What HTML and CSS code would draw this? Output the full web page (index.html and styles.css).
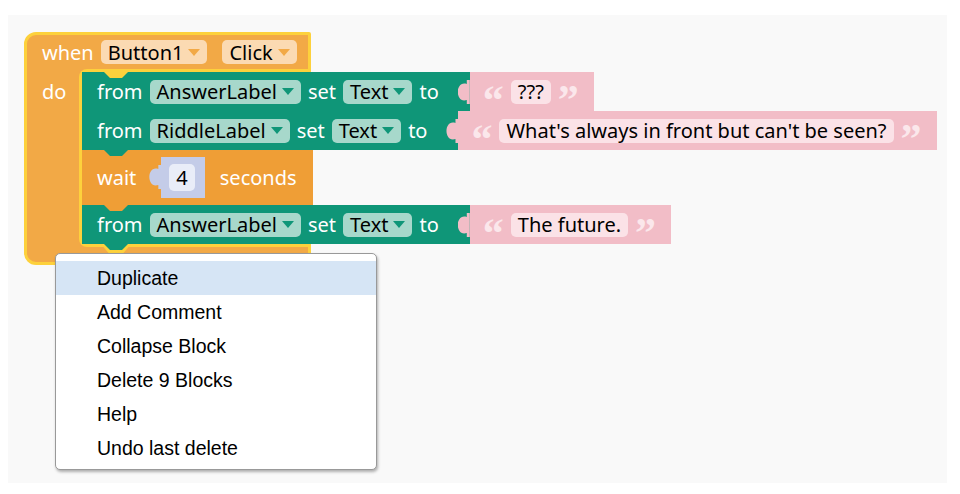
FILE: index.html
```html
<!DOCTYPE html>
<html>
	<head>
		<meta charset="UTF-8">
		<title>Blocks</title>
		<link rel="stylesheet" href="styles.css">
	</head>
	<body>
		<div class="workspace">
			<div class="event">
				<div class="head">
					<span class="lbl">when</span>
					<span class="dd dd-o">Button1<i class="arrow"></i></span>
					<span class="dd dd-o click">Click<i class="arrow"></i></span>
				</div>
				<div class="body">
					<div class="do"><span class="lbl">do</span></div>
					<div class="mouth">
						<div class="stmt set">
							<span class="lbl">from</span>
							<span class="dd dd-g">AnswerLabel<i class="arrow"></i></span>
							<span class="lbl">set</span>
							<span class="dd dd-g">Text<i class="arrow"></i></span>
							<span class="lbl">to</span>
							<div class="str">
								<span class="q">“</span><span class="field">???</span><span class="q">”</span>
							</div>
						</div>
						<div class="stmt set">
							<span class="lbl">from</span>
							<span class="dd dd-g">RiddleLabel<i class="arrow"></i></span>
							<span class="lbl">set</span>
							<span class="dd dd-g">Text<i class="arrow"></i></span>
							<span class="lbl">to</span>
							<div class="str">
								<span class="q">“</span><span class="field">What's always in front but can't be seen?</span><span class="q">”</span>
							</div>
						</div>
						<div class="stmt wait">
							<span class="lbl">wait</span>
							<div class="num"><span class="field">4</span></div>
							<span class="lbl">seconds</span>
						</div>
						<div class="stmt set">
							<span class="lbl">from</span>
							<span class="dd dd-g">AnswerLabel<i class="arrow"></i></span>
							<span class="lbl">set</span>
							<span class="dd dd-g">Text<i class="arrow"></i></span>
							<span class="lbl">to</span>
							<div class="str">
								<span class="q">“</span><span class="field">The future.</span><span class="q">”</span>
							</div>
						</div>
					</div>
				</div>
				<div class="foot"></div>
			</div>
			<ul class="menu">
				<li class="hover">Duplicate</li>
				<li>Add Comment</li>
				<li>Collapse Block</li>
				<li>Delete 9 Blocks</li>
				<li>Help</li>
				<li>Undo last delete</li>
			</ul>
		</div>
	</body>
</html>
```
FILE: styles.css
```css
* {
	margin: 0;
	padding: 0;
	box-sizing: border-box;
}
body {
	background: #fff;
	font-family: "Noto Sans", "Open Sans", sans-serif;
	font-size: 20px;
	white-space: nowrap;
}
.workspace {
	position: relative;
	width: 939px;
	height: 468px;
	margin: 15px 0 0 8px;
	padding: 17px 0 0 16px;
	background: #f9f9f9;
}
/* event block (when ... do) */
.event {
	width: 287px;
	border: 3px solid #fdd13c;
	border-radius: 12px 2px 2px 12px;
	background: #f2a946;
}
.head {
	display: flex;
	align-items: center;
	gap: 7px;
	height: 34px;
	padding-left: 15px;
}
.head .click {
	margin-left: 8px;
}
.body {
	display: flex;
}
.do {
	flex: none;
	width: 52px;
	padding: 3px 0 0 15px;
	line-height: 40px;
}
.mouth {
	position: relative;
	flex: 1;
	min-width: 0;
	display: flex;
	flex-direction: column;
	align-items: flex-start;
	border: 3px solid #fdd13c;
	border-right: none;
	border-radius: 8px 0 0 8px;
}
.mouth::before,
.mouth::after,
.stmt::after {
	content: '';
	position: absolute;
	clip-path: polygon(0 0, 100% 0, 75% 100%, 25% 100%);
}
.mouth::before {
	left: 22px;
	top: 0;
	width: 24px;
	height: 6px;
	background: #fdd13c;
	z-index: 1;
}
.mouth::after {
	left: 19px;
	top: 100%;
	width: 30px;
	height: 9px;
	background: #fdd13c;
	z-index: 1;
}
.foot {
	height: 15px;
}
.lbl {
	color: #fff;
}
/* statements */
.stmt {
	position: relative;
	display: flex;
	align-items: center;
	gap: 7px;
	width: max-content;
	padding-left: 15px;
}
.stmt::after {
	left: 22px;
	top: 100%;
	width: 24px;
	height: 6px;
	background: inherit;
	z-index: 2;
}
.set {
	height: 39px;
	background: #0f9678;
}
.wait {
	height: 55px;
	padding-right: 16px;
	background: #ef9e36;
}
.wait .num {
	margin: 0 8px 0 18px;
}
/* dropdown fields */
.dd {
	display: flex;
	align-items: center;
	height: 24px;
	padding: 0 7px;
	border-radius: 5px;
	color: #000;
}
.arrow {
	display: inline-block;
	width: 0;
	height: 0;
	margin-left: 5px;
	border-left: 6.5px solid transparent;
	border-right: 6.5px solid transparent;
	border-top: 7px solid;
}
.dd-o {
	background: #fbdab2;
}
.dd-o .arrow {
	border-top-color: #f2a946;
}
.dd-g {
	background: #a7d8cb;
}
.dd-g .arrow {
	border-top-color: #0f9678;
}
/* text value blocks */
.str {
	position: relative;
	display: flex;
	align-items: center;
	gap: 7px;
	align-self: stretch;
	margin-left: 24px;
	padding: 0 15px 0 13px;
	background: #f2bdc7;
}
.str::before,
.num::before {
	content: '';
	position: absolute;
	left: -12px;
	top: 8px;
	width: 12px;
	height: 24px;
	background: inherit;
	clip-path: path('M12,0 V24 H9 V20 C3,22 0,17 0,12 C0,7 3,2 9,4 V0 Z');
}
.q {
	color: #fbe7eb;
	font-family: "Liberation Serif", serif;
	font-weight: bold;
	font-size: 42px;
	line-height: 20px;
	transform: translateY(8px);
}
.field {
	height: 24px;
	line-height: 24px;
	padding: 0 7px;
	border-radius: 5px;
	background: #fbe2e7;
	color: #000;
}
.num {
	position: relative;
	display: flex;
	align-items: center;
	height: 41px;
	padding: 0 10px 0 8px;
	background: #c4cce8;
}
.num .field {
	height: 27px;
	line-height: 27px;
	background: #e9edf8;
}
/* context menu */
.menu {
	position: absolute;
	left: 47px;
	top: 238px;
	z-index: 5;
	width: 322px;
	padding: 7px 0 4px;
	list-style: none;
	background: #fff;
	border: 1px solid #999;
	border-radius: 5px;
	box-shadow: 1px 2px 3px rgba(0, 0, 0, 0.3);
	font-family: "Liberation Sans", Arial, sans-serif;
	font-size: 19.5px;
}
.menu li {
	height: 34px;
	line-height: 34px;
	padding-left: 41px;
	color: #000;
}
.menu .hover {
	background: #d6e5f5;
}
```
